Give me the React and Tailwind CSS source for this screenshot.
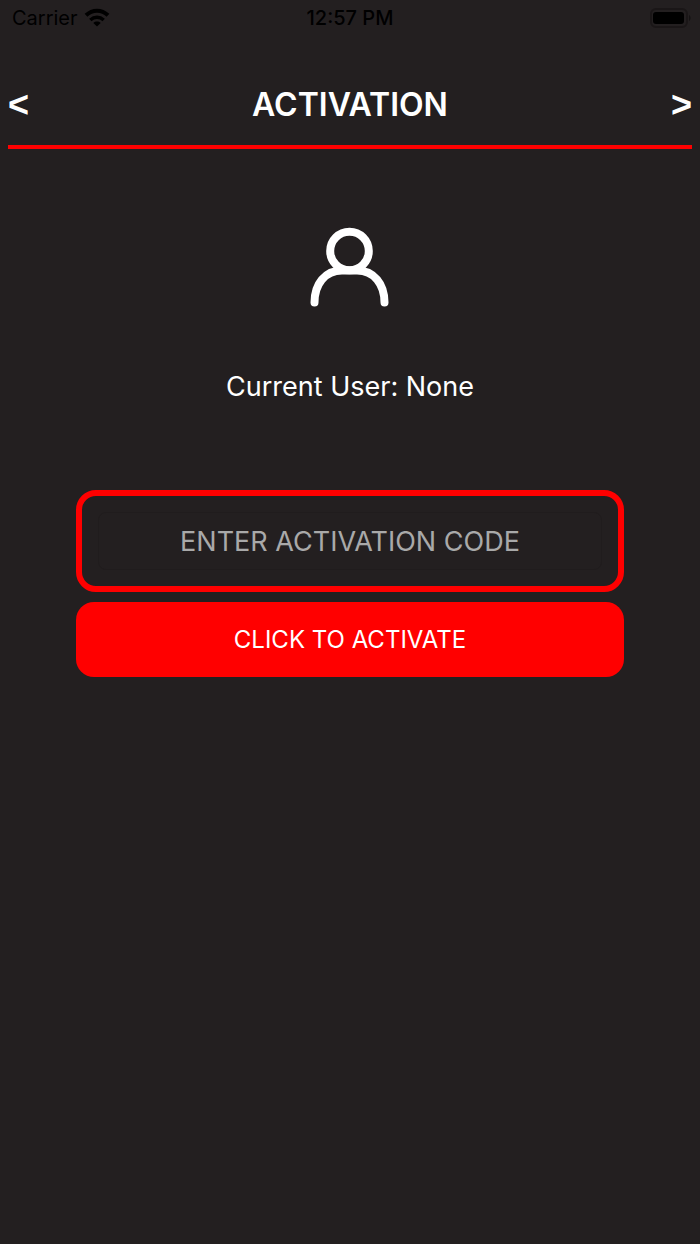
const StatusBar = () => {
  return (
    <div className="grid grid-cols-3 items-center h-9 px-2 text-xl text-black">
      <div className="flex items-center gap-1.5 pl-1">
        <span>Carrier</span>
        {/* wifi */}
        <svg width="26" height="20" viewBox="0 0 26 20" fill="none" stroke="black">
          <path d="M2 7.3C8.500 1.200 17.500 1.200 24 7.300" strokeWidth="4" />
          <path d="M6.300 12C10.200 8.400 15.800 8.400 19.700 12" strokeWidth="3.400" />
          <path d="M13 18.500L9.300 15C11.400 13.100 14.600 13.100 16.700 15Z" fill="black" stroke="none" />
        </svg>
      </div>
      <span className="text-center font-medium whitespace-nowrap">12:57 PM</span>
      {/* battery */}
      <svg className="justify-self-end" width="42" height="20" viewBox="0 0 42 20">
        <rect x="1" y="1" width="36" height="18" rx="5" fill="none" stroke="#1a1617" strokeWidth="2" />
        <rect x="3" y="4" width="31" height="12" rx="3" fill="black" />
        <path d="M39 7C41 8 41 12 39 13Z" fill="#151213" />
      </svg>
    </div>
  );
};

const Header = () => {
  return (
    <header className="flex items-center justify-between mx-2 mt-7 h-[85px] border-b-4 border-[#ff0000]">
      <button type="button" aria-label="Previous" className="font-['Liberation_Sans',sans-serif] font-bold text-4xl">
        &lt;
      </button>
      <h1 className="text-[32px] leading-10 font-semibold">ACTIVATION</h1>
      <button type="button" aria-label="Next" className="font-['Liberation_Sans',sans-serif] font-bold text-4xl">
        &gt;
      </button>
    </header>
  );
};

const UserIcon = () => {
  return (
    <svg width="80" height="80" viewBox="0 0 80 80" fill="none" stroke="white" strokeWidth="8" strokeLinecap="round">
      <circle cx="39.500" cy="24" r="19.300" />
      <path d="M4.500 75.500C4.500 57 15 43.500 32 43.500H47C64 43.500 74.500 57 74.500 75.500" />
    </svg>
  );
};

const App = () => {
  return (
    <div className="min-h-screen bg-[#231f20] text-white font-['Inter',sans-serif]">
      <StatusBar />
      <Header />

      <main className="flex flex-col items-center px-19">
        <div className="mt-[78px]">
          <UserIcon />
        </div>
        <p className="mt-15 text-[27px] leading-10">Current User: None</p>

        <form className="flex flex-col gap-2.5 w-full mt-[83px]" onSubmit={(e) => e.preventDefault()}>
          <div className="border-6 border-[#ff0000] rounded-[20px] px-4 py-4">
            <input
              type="text"
              aria-label="Activation code"
              placeholder="ENTER ACTIVATION CODE"
              className="block w-full h-[58px] border border-[#201c1d] rounded-lg text-center text-[27px] placeholder:text-[#a9a9a9]"
            />
          </div>
          <button type="submit" className="h-[75px] rounded-[18px] bg-[#ff0000] text-2xl">
            CLICK TO ACTIVATE
          </button>
        </form>
      </main>
    </div>
  );
};

export default App;
